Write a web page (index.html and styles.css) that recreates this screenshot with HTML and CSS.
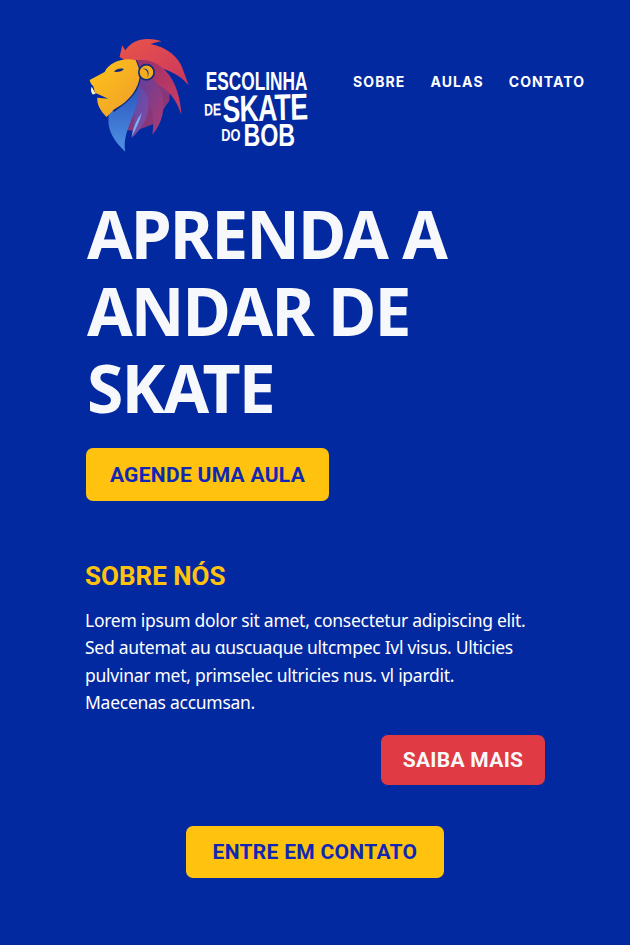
FILE: index.html
```html
<!DOCTYPE html>
<html lang="pt">
<head>
<meta charset="utf-8">
<title>Escolinha de Skate do Bob</title>
<link rel="stylesheet" href="styles.css">
</head>
<body>
<div class="page">
  <header class="site-header">
    <svg class="lion" viewBox="24 20 310 350" aria-hidden="true">
      <defs>
        <linearGradient id="g0" x1="0" y1="0" x2="1" y2="1"><stop offset="0" stop-color="#6a3a98"/><stop offset="1" stop-color="#93356f"/></linearGradient>
        <linearGradient id="g1" x1="0" y1="0" x2="1" y2="1"><stop offset="0" stop-color="#ea5548"/><stop offset="1" stop-color="#c9365f"/></linearGradient>
        <linearGradient id="g2" x1="0" y1="0" x2="1" y2="1"><stop offset="0" stop-color="#94316f"/><stop offset="1" stop-color="#d23c5e"/></linearGradient>
        <linearGradient id="g3" x1="0" y1="0" x2="1" y2="1"><stop offset="0" stop-color="#5b3f9f"/><stop offset="1" stop-color="#b03a6e"/></linearGradient>
        <linearGradient id="g4" x1="0" y1="0" x2="1" y2="1"><stop offset="0" stop-color="#4b4bb0"/><stop offset="1" stop-color="#8a4a9f"/></linearGradient>
        <linearGradient id="g5" x1="0" y1="0" x2="0" y2="1"><stop offset="0" stop-color="#2a55bd"/><stop offset="1" stop-color="#4f93e4"/></linearGradient>
        <linearGradient id="g6" x1="0" y1="0" x2="1" y2="1"><stop offset="0" stop-color="#ffc61a"/><stop offset="1" stop-color="#ee9a2a"/></linearGradient>
      </defs>
      <path fill="url(#g0)" d="M150 85 C225 70 280 145 268 215 L218 285 L165 305 L125 300 L100 250 Z"/>
      <path fill="url(#g1)" d="M119 82 L127 47 L136 62 C155 32 195 18 246 35 C232 37 222 40 212 43 C262 52 298 85 308 115 L327 167 C295 128 240 104 175 112 L135 92 Z"/>
      <path fill="url(#g2)" d="M170 92 C245 82 300 150 305 256 C290 208 262 175 225 162 L180 150 Z"/>
      <path fill="url(#g3)" d="M170 130 C255 135 278 245 218 316 C226 258 215 208 170 185 Z"/>
      <path fill="url(#g4)" d="M160 165 C232 185 212 280 155 326 C166 275 172 225 140 200 Z"/>
      <path fill="url(#g5)" d="M176 172 C182 245 125 300 136 367 C108 340 76 305 88 248 C115 238 150 212 176 172 Z"/>
      <path fill="#7db0ee" d="M186 250 C180 275 168 300 155 322 C160 295 170 270 186 250 Z"/>
      <path fill="none" stroke="#10287f" stroke-width="7" d="M168 92 L180 125 C182 165 160 200 125 226 L100 245"/>
      <path fill="url(#g6)" d="M29 151 L74 127 C88 98 130 82 168 92 L180 125 C182 165 160 200 125 226 L102 240 L80 263 C62 245 50 225 52 205 L85 208 L45 190 L40 170 C35 165 30 158 29 151 Z"/>
      <path fill="#fff2c8" d="M35 172 L47 193 L38 195 C32 188 32 178 35 172 Z"/>
      <circle cx="200" cy="128" r="23" fill="#f4ae1d" stroke="#0c2a80" stroke-width="5"/>
      <path fill="#18307f" d="M188 117 C204 114 212 128 202 146 C208 128 200 120 188 117 Z"/>
      <path fill="#12287e" d="M102 126 C110 117 122 115 132 118 C128 125 112 129 102 126 Z"/>
    </svg>
    <div class="wordmark">
      <span class="wm-top">ESCOLINHA</span>
      <span class="wm-mid"><small class="wm-small">DE</small><b class="wm-big">SKATE</b></span>
      <span class="wm-bot"><small class="wm-small">DO</small><b class="wm-bob">BOB</b></span>
    </div>
    <nav class="nav">
      <a class="nav-link">SOBRE</a>
      <a class="nav-link">AULAS</a>
      <a class="nav-link">CONTATO</a>
    </nav>
  </header>
  <main class="content">
    <h1 class="hero-title">APRENDA A ANDAR DE SKATE</h1>
    <a class="btn btn-yellow btn-agende">AGENDE UMA AULA</a>
    <section class="about">
      <h2 class="about-title">SOBRE NÓS</h2>
      <p class="about-text">Lorem ipsum dolor sit amet, consectetur adipiscing elit.<br>Sed autemat au ɑuscuaque ultcmpec Ivl visus. Ulticies<br>pulvinar met, primselec ultricies nus. vl ipardit.<br>Maecenas accumsan.</p>
      <div class="about-action"><a class="btn btn-red">SAIBA MAIS</a></div>
    </section>
    <div class="contact"><a class="btn btn-yellow btn-contact">ENTRE EM CONTATO</a></div>
  </main>
</div>
</body>
</html>
```
FILE: styles.css
```css
* { box-sizing: border-box; }
html, body { margin: 0; padding: 0; }
body { background: #0329a0; color: #fff; font-family: Roboto, sans-serif; }
.page { width: 630px; height: 945px; overflow: hidden; }
.site-header { display: flex; align-items: flex-start; padding: 36px 0 0 88px; height: 190px; }
.lion { width: 103px; height: 117px; flex: none; }
.wordmark { width: 104px; margin: 33px 0 0 14px; flex: none; display: flex; flex-direction: column; align-items: center; font-family: "Liberation Sans", sans-serif; font-weight: 700; line-height: 1; }
.wm-top { font-size: 25px; line-height: 25px; white-space: nowrap; transform: scaleX(0.69); }
.wm-mid { display: flex; align-items: center; height: 29px; margin-left: -2px; white-space: nowrap; transform: scaleX(0.72) rotate(-1.5deg); }
.wm-bot { display: flex; align-items: center; height: 25px; margin-left: 2px; white-space: nowrap; transform: scaleX(0.75); }
.wm-small { font-size: 17px; margin-right: 2px; }
.wm-big { font-size: 37px; letter-spacing: -1px; }
.wm-bob { font-size: 31px; margin-left: 2px; }
.nav { display: flex; gap: 25px; margin: 36px 0 0 44px; font-family: Inter, sans-serif; }
.nav-link { font-size: 14px; font-weight: 700; letter-spacing: 1.1px; line-height: 20px; white-space: nowrap; }
.content { padding: 0 85px; }
.hero-title { margin: 5px 0 0 2px; width: 420px; font-family: "Noto Sans", sans-serif; font-size: 66px; letter-spacing: -1.9px; font-weight: 700; line-height: 77px; color: #f7f8fb; }
.btn { display: inline-flex; align-items: center; justify-content: center; font-weight: 700; white-space: nowrap; border-radius: 7px; }
.btn-yellow { background: #ffc30f; color: #1026b4; }
.btn-agende { width: 243px; height: 53px; margin: 22px 0 0 1px; font-size: 21px; letter-spacing: 0.3px; }
.about { margin-top: 58px; }
.about-title { margin: 0; font-size: 26px; line-height: 34px; font-weight: 700; color: #ffc30f; }
.about-text { margin: 14px 0 0; font-family: "Noto Sans", sans-serif; font-size: 17.5px; letter-spacing: -0.27px; line-height: 27.3px; white-space: nowrap; }
.about-action { display: flex; justify-content: flex-end; width: 460px; margin-top: 19px; }
.btn-red { width: 164px; height: 50px; background: #e03a45; color: #f8f8fa; font-size: 21px; letter-spacing: 0.3px; }
.contact { display: flex; justify-content: center; width: 630px; margin: 41px 0 0 -85px; }
.btn-contact { width: 258px; height: 52px; font-size: 21px; letter-spacing: 0.3px; }
```
